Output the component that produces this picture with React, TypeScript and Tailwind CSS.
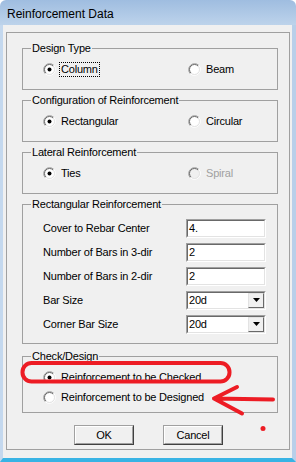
import React from 'react';

interface RadioProps {
  checked?: boolean;
  disabled?: boolean;
}

const RadioIcon: React.FC<RadioProps> = ({ checked, disabled }) => (
  <svg width="13" height="13" viewBox="0 0 13 13" className="shrink-0">
    <circle cx="6.5" cy="6.5" r="5" fill={disabled ? '#f0f0f0' : '#ffffff'} />
    <path d="M2.26 10.74 A6 6 0 0 1 10.74 2.26" fill="none" stroke="#a0a0a0" strokeWidth="1" />
    <path d="M10.74 2.26 A6 6 0 0 1 2.26 10.74" fill="none" stroke="#ffffff" strokeWidth="1" />
    <path d="M2.96 10.04 A5 5 0 0 1 10.04 2.96" fill="none" stroke="#696969" strokeWidth="1" />
    <path d="M10.04 2.96 A5 5 0 0 1 2.96 10.04" fill="none" stroke="#e3e3e3" strokeWidth="1" />
    {checked && <circle cx="6.5" cy="6.5" r="2" fill={disabled ? '#a0a0a0' : '#000000'} />}
  </svg>
);

interface OptionProps {
  label: string;
  checked?: boolean;
  disabled?: boolean;
  focused?: boolean;
}

const Option: React.FC<OptionProps> = ({ label, checked, disabled, focused }) => (
  <div className="flex items-center h-[16px]">
    <RadioIcon checked={checked} disabled={disabled} />
    {focused ? (
      <span className="ml-[3px] px-[1px] border border-dotted border-black leading-[13px]">{label}</span>
    ) : (
      <span className={`ml-[5px] leading-[13px] ${disabled ? 'text-[#a0a0a0]' : ''}`}>{label}</span>
    )}
  </div>
);

interface GroupProps {
  title: string;
  className: string;
  children: React.ReactNode;
}

const Group: React.FC<GroupProps> = ({ title, className, children }) => (
  <div className={`relative border border-[#a0a0a0] ${className}`}>
    <span className="absolute left-[8px] top-[-7px] bg-[#f0f0f0] px-[1px] leading-[13px]">{title}</span>
    {children}
  </div>
);

const Sunken: React.FC<{ children: React.ReactNode }> = ({ children }) => (
  <div className="w-[80px] h-[19px] border border-t-[#a0a0a0] border-l-[#a0a0a0] border-r-white border-b-white">
    <div className="h-full bg-white border border-t-[#696969] border-l-[#696969] border-r-[#e3e3e3] border-b-[#e3e3e3] flex items-center">
      {children}
    </div>
  </div>
);

const TextRow: React.FC<{ label: string; value: string }> = ({ label, value }) => (
  <div className="flex items-center h-[24px]">
    <span className="flex-1 pl-[20px] leading-[13px]">{label}</span>
    <Sunken>
      <span className="pl-[1px] leading-[13px]">{value}</span>
    </Sunken>
  </div>
);

const ComboRow: React.FC<{ label: string; value: string }> = ({ label, value }) => (
  <div className="flex items-center h-[24px]">
    <span className="flex-1 pl-[20px] leading-[13px]">{label}</span>
    <Sunken>
      <span className="flex-1 pl-[1px] leading-[13px]">{value}</span>
      <div className="w-[16px] h-full bg-[#f0f0f0] border border-t-[#e3e3e3] border-l-[#e3e3e3] border-r-[#696969] border-b-[#696969] flex items-center justify-center">
        <svg width="7" height="4" viewBox="0 0 7 4">
          <path d="M0 0 H7 L3.5 4 Z" fill="#000" />
        </svg>
      </div>
    </Sunken>
  </div>
);

const WinButton: React.FC<{ label: string }> = ({ label }) => (
  <button className="w-[60px] h-[20px] border border-t-[#a0a0a0] border-l-[#a0a0a0] border-r-[#404040] border-b-[#404040] bg-[#f0f0f0]">
    <div className="h-full border border-t-white border-l-white border-r-[#a0a0a0] border-b-[#a0a0a0] flex items-center justify-center leading-[13px]">
      {label}
    </div>
  </button>
);

const App: React.FC = () => {
  return (
    <div className="relative w-[296px] h-[462px] flex flex-col font-['Liberation_Sans',Arial,sans-serif] text-[11px] tracking-[-0.2px] text-black">
      <div className="h-[25px] shrink-0 flex items-center pl-[7px] pt-[2px] rounded-t-[6px] bg-linear-to-b from-[#9fbde0] to-[#bdd3eb] text-[12px] tracking-normal">
        Reinforcement Data
      </div>

      <div className="flex-1 flex flex-col bg-[#f0f0f0] border-l-[3px] border-r-[4px] border-b-[4px] border-l-[#c4d8ee] border-r-[#b8cfe9] border-b-[#38b3e4]">
        <div className="mt-[7px] ml-[3px] mr-[2px] mb-[8px] flex-1 border border-[#a0a0a0] flex flex-col pt-[15px] pl-[15px] pr-[11px] pb-[4px]">
          <Group title="Design Type" className="h-[42px] flex items-center pl-[20px] pt-[1px]">
            <div className="w-[145px]">
              <Option label="Column" checked focused />
            </div>
            <Option label="Beam" />
          </Group>

          <Group title="Configuration of Reinforcement" className="mt-[10px] h-[42px] flex items-center pl-[20px] pt-[1px]">
            <div className="w-[145px]">
              <Option label="Rectangular" checked />
            </div>
            <Option label="Circular" />
          </Group>

          <Group title="Lateral Reinforcement" className="mt-[10px] h-[42px] flex items-center pl-[20px] pt-[1px]">
            <div className="w-[145px]">
              <Option label="Ties" checked />
            </div>
            <Option label="Spiral" disabled />
          </Group>

          <Group title="Rectangular Reinforcement" className="mt-[10px] h-[140px] pt-[11px] pr-[11px]">
            <TextRow label="Cover to Rebar Center" value="4." />
            <TextRow label="Number of Bars in 3-dir" value="2" />
            <TextRow label="Number of Bars in 2-dir" value="2" />
            <ComboRow label="Bar Size" value="20d" />
            <ComboRow label="Corner Bar Size" value="20d" />
          </Group>

          <Group title="Check/Design" className="mt-[12px] h-[57px] pt-[10px] pl-[20px]">
            <div className="h-[20px] flex items-center">
              <Option label="Reinforcement to be Checked" checked />
            </div>
            <div className="h-[20px] flex items-center">
              <Option label="Reinforcement to be Designed" />
            </div>
          </Group>

          <div className="mt-[12px] flex gap-[29px] pl-[52px]">
            <WinButton label="OK" />
            <WinButton label="Cancel" />
          </div>
        </div>
      </div>

      <svg className="absolute inset-0 pointer-events-none" width="296" height="462" viewBox="0 0 296 462">
        <rect x="22.5" y="363" width="207" height="18.5" rx="9" fill="none" stroke="#ed1c24" strokeWidth="4" />
        <path d="M273 399.5 L214 398.5 M237 387 L214 398.5 L242 413.5" fill="none" stroke="#ed1c24" strokeWidth="4" strokeLinecap="round" strokeLinejoin="round" />
        <circle cx="263" cy="428.5" r="2.5" fill="#ed1c24" />
      </svg>
    </div>
  );
};

export default App;
